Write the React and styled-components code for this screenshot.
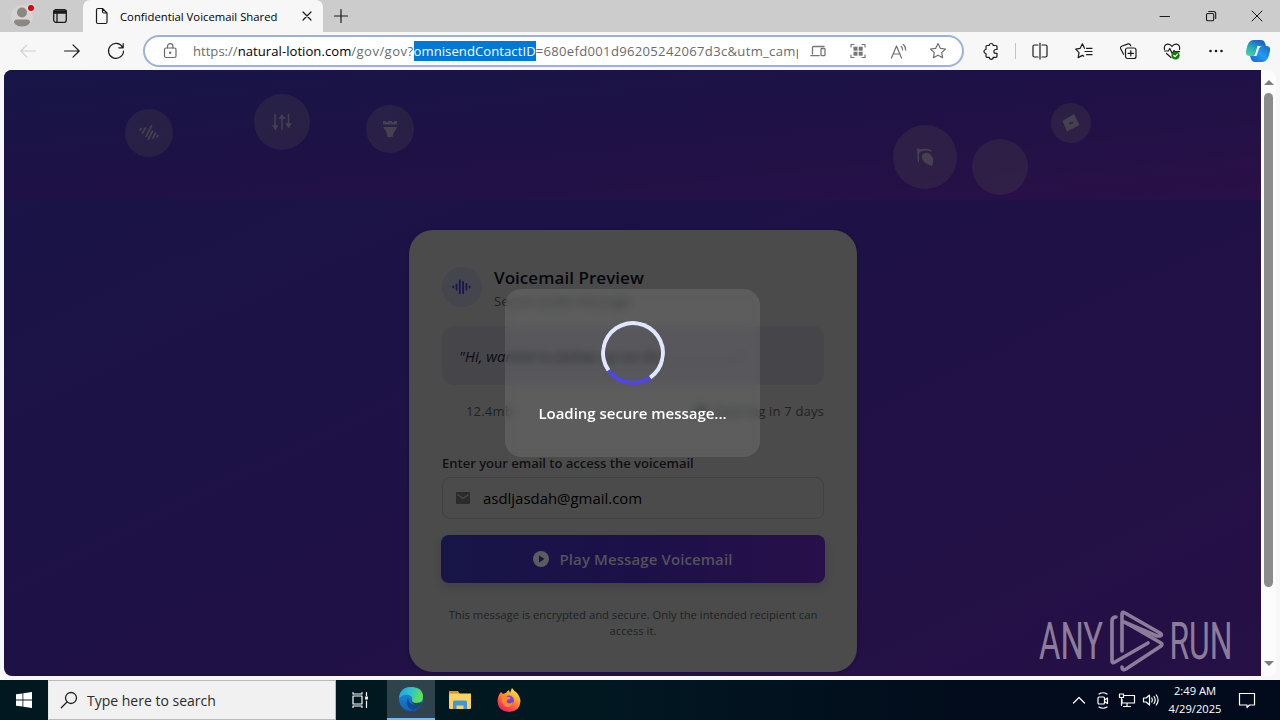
import styled, { createGlobalStyle, css } from "styled-components";

const GlobalStyle = createGlobalStyle`
  * {
    box-sizing: border-box;
  }
  body {
    margin: 0;
    overflow: hidden;
    font-family: "Open Sans", "Noto Sans", sans-serif;
    color: #000;
  }
  svg {
    display: block;
    flex: none;
    overflow: visible;
  }
`

const Screen = styled.div`
  width: 1280px;
  height: 720px;
  display: flex;
  flex-direction: column;
  background: #f7f7f7;
`

/* ---------- Browser ---------- */

const TabStrip = styled.div`
  height: 32px;
  display: flex;
  background: #ccc;
`

const Slot = styled.div`
  width: ${({ $w }) => $w}px;
  height: 100%;
  flex: none;
  display: flex;
  align-items: center;
  justify-content: center;
`

const StripStart = styled.div`
  width: 83px;
  display: flex;
  padding-left: 3px;
  border-bottom-right-radius: 4px;
`

const Tab = styled.div`
  width: 240px;
  display: flex;
  align-items: center;
  padding-left: 12px;
  background: #f7f7f7;
  border-radius: 7px 7px 0 0;
`

const TabTitle = styled.div`
  flex: 1;
  padding-left: 11px;
  font-size: 11.3px;
  white-space: nowrap;
`

const StripSpace = styled.div`
  flex: 1;
`

const Toolbar = styled.div`
  height: 38px;
  flex: none;
  display: flex;
  align-items: center;
  padding-left: 6px;
`

const AddressBar = styled.div`
  width: 821px;
  height: 32px;
  margin: 0 7px 0 5px;
  display: flex;
  align-items: center;
  border: 2px solid #9cb2d9;
  border-radius: 16px;
  background: #fff;
  padding-left: 5px;
`

const Url = styled.div`
  width: 605px;
  margin-left: 3px;
  overflow: hidden;
  white-space: nowrap;
  font-size: 13.1px;
  line-height: 20px;
  color: #6b6b6b;

  b {
    font-weight: 400;
    letter-spacing: 0.04px;
    color: #000;
  }
  mark {
    display: inline-block;
    height: 20px;
    letter-spacing: 0.06px;
    background: #0078d7;
    color: #fff;
  }
`

const Path = styled.span`
  letter-spacing: ${({ $spacing }) => $spacing}px;
`

const Divider = styled.div`
  width: 1px;
  height: 16px;
  margin: 0 2px 0 4px;
  background: #c4c4c4;
`

const Viewport = styled.div`
  height: 606px;
  margin: 0 4px;
  display: flex;
  border-radius: 8px;
  overflow: hidden;
`

const Scrollbar = styled.div`
  width: 15px;
  display: flex;
  flex-direction: column;
  align-items: center;
  padding: 10px 0 10px;
  background: #fcfcfc;
`

const Thumb = styled.div`
  width: 9px;
  height: 494px;
  margin: 8px 0 auto;
  border-radius: 5px;
  background: #8b8b8b;
`

/* ---------- Page ---------- */

const Page = styled.main`
  position: relative;
  width: 1257px;
  height: 606px;
  overflow: hidden;
  background: linear-gradient(to bottom right, #191447 0%, #1e1145 50%, #261046 100%);
`

const Hero = styled.div`
  height: 130px;
  background: linear-gradient(to bottom right, #171547 0%, #1e1145 48%, #2a1047 100%);
`

const Bubble = styled.div`
  position: absolute;
  left: ${({ $x }) => $x}px;
  top: ${({ $y }) => $y}px;
  width: ${({ $size }) => $size}px;
  height: ${({ $size }) => $size}px;
  display: flex;
  align-items: center;
  justify-content: center;
  border-radius: 50%;
  background: rgba(72, 66, 74, 0.3);
  color: #464150;
`

const Card = styled.section`
  width: 448px;
  height: 442px;
  margin: 30px 0 0 405px;
  padding: 37px 33px 0;
  border-radius: 24px;
  background: #4b4b4b;
  box-shadow: 0 0 3px rgba(20, 16, 60, 0.8);
`

const CardHead = styled.div`
  display: flex;
  gap: 12px;
  height: 40px;
`

const Badge = styled.div`
  width: 40px;
  height: 40px;
  display: flex;
  align-items: center;
  justify-content: center;
  border-radius: 50%;
  background: #45454e;
`

const Title = styled.h2`
  margin: -3px 0 0;
  font-size: 17px;
  font-weight: 600;
  letter-spacing: 0.05px;
  line-height: 28px;
  color: #06070c;
`

const Subtitle = styled.p`
  margin: 0;
  font-size: 13px;
  line-height: 19px;
  color: #202224;
`

const Quote = styled.div`
  height: 59px;
  margin-top: 19px;
  padding: 0 17px;
  border-radius: 12px;
  background: #46464a;
  font-size: 15px;
  font-style: italic;
  line-height: 60px;
  color: #0b0d12;
  white-space: nowrap;

  span {
    color: #26282e;
    letter-spacing: 1.6px;
  }
`

const Meta = styled.div`
  display: flex;
  align-items: center;
  justify-content: space-between;
  height: 20px;
  margin-top: 16px;
  padding-left: 24px;
  font-size: 13px;
  letter-spacing: 0.18px;
  color: #202224;

  div {
    display: flex;
    align-items: center;
    gap: 7px;
  }
`

const Label = styled.label`
  display: block;
  margin-top: 32px;
  font-size: 13px;
  font-weight: 600;
  line-height: 20px;
  color: #0f1113;
`

const Field = styled.div`
  height: 42px;
  margin-top: 4px;
  display: flex;
  align-items: center;
  gap: 13px;
  padding-left: 13px;
  border: 1px solid #404143;
  border-radius: 8px;
  font-size: 14.95px;
  color: #000;
`

const PlayButton = styled.button`
  width: 384px;
  height: 48px;
  margin: 16px 0 0 -1px;
  padding: 0;
  display: flex;
  align-items: center;
  justify-content: center;
  gap: 10px;
  border: 0;
  border-radius: 8px;
  background: linear-gradient(to right, #171547, #1c1049 50%, #28104a);
  box-shadow: 0 4px 10px rgba(0, 0, 0, 0.14);
  font-family: inherit;
  font-size: 15px;
  font-weight: 600;
  letter-spacing: 0.1px;
  color: #54525a;
`

const Footnote = styled.p`
  margin: 24px 0 0;
  text-align: center;
  font-size: 11.25px;
  line-height: 16px;
  color: #202224;
`

const Overlay = styled.div`
  position: absolute;
  inset: 0;
  display: flex;
  align-items: center;
  justify-content: center;
`

const LoaderBox = styled.div`
  width: 255px;
  height: 168px;
  display: flex;
  flex-direction: column;
  align-items: center;
  padding-top: 32px;
  border-radius: 16px;
  background: rgba(255, 255, 255, 0.1);
  backdrop-filter: blur(4px);
`

const Spinner = styled.div`
  width: 64px;
  height: 64px;
  border: 4px solid #e0e7ff;
  border-top-color: #4f46e5;
  border-radius: 50%;
  transform: rotate(190deg);
`

const LoaderText = styled.p`
  margin: 16px 0 0;
  font-size: 15px;
  font-weight: 600;
  line-height: 24px;
  letter-spacing: -0.02px;
  color: #fff;
  white-space: nowrap;
`

const Watermark = styled.div`
  position: absolute;
  left: 1034px;
  top: 539px;
`

/* ---------- Taskbar ---------- */

const Taskbar = styled.footer`
  height: 40px;
  margin-top: 4px;
  flex: none;
  display: flex;
  background: linear-gradient(to right, #011821 0%, #011821 45%, #020c1c 75%, #020b1c 100%);
`

const SearchBox = styled.div`
  width: 288px;
  display: flex;
  align-items: center;
  padding-left: 12px;
  gap: 10px;
  border: 1px solid #b9b9b9;
  border-left-color: #e5e5e5;
  background: #f1f1f1;
  font-size: 14px;
  color: #2b2b2b;
`

const AppSlot = styled(Slot)`
  ${({ $active }) => $active && css`
    background: #2e434b;
    border-bottom: 2px solid #76b9ed;
  `}
`

const TaskViewSlot = styled(Slot)`
  padding-right: 3px;
`

const Clock = styled.div`
  width: 64px;
  display: flex;
  flex-direction: column;
  justify-content: center;
  text-align: center;
  font-size: 11.2px;
  line-height: 18px;
  color: #fff;
`

/* ---------- Icons ---------- */

const Icon = ({ size = 18, color = "#1b1b1b", sw = 1.2, box = 18, children }) => (
  <svg width={size} height={size} viewBox={`0 0 ${box} ${box}`} fill="none" stroke={color} strokeWidth={sw} strokeLinecap="round" strokeLinejoin="round">
    {children}
  </svg>
)

const Avatar = () => (
  <svg width="26" height="26" viewBox="0 0 26 26">
    <circle cx="13" cy="13" r="11" fill="#d6d3d1" />
    <circle cx="13" cy="9.5" r="5" fill="#8b8784" />
    <path d="M5 19.5q0-3 3-3h10q3 0 3 3q-2 4-8 4t-8-4z" fill="#8b8784" />
    <circle cx="22" cy="5" r="4" fill="#ddd" />
    <circle cx="22" cy="5" r="3" fill="#d8000c" />
  </svg>
)

const Workspaces = () => (
  <Icon size={14} box={14} sw={1.3}>
    <rect x=".7" y=".7" width="12.6" height="12.6" rx="2.2" />
    <path d="M1 2h12v2H1z" fill="#1b1b1b" />
    <path d="M4 4v9" />
  </Icon>
)

const star = "M9 1.5l2.3 4.8 5.2.7-3.8 3.6.9 5.2L9 13.3l-4.6 2.5.9-5.2L1.5 7l5.2-.7z"

const Lock = () => (
  <Icon size={18} color="#6b6b6b">
    <rect x="3.5" y="6" width="11.5" height="9.5" rx="1.5" />
    <path d="M6.500 6V4.300a2.700 2.700 0 0 1 5.400 0V6" />
    <circle cx="9.200" cy="10.800" r=".6" fill="#6b6b6b" />
  </Icon>
)

const Devices = () => (
  <Icon size={16} box={16} color="#767676" sw={1.3}>
    <path d="M2.500 11V4.500q0-1 1-1H14M.8 12.700h8.400" />
    <rect x="11" y="5.500" width="4" height="7.200" rx=".8" />
  </Icon>
)

const QrApps = () => (
  <Icon size={16} box={16} color="#767676" sw={1.2}>
    <path d="M1 4V1.500h3M12 1.500h3V4M15 12v2.500h-3M4 14.500H1V12" />
    <g fill="#767676" stroke="none">
      <rect x="3.500" y="3.700" width="4" height="4" />
      <rect x="8.700" y="3.700" width="4" height="4" />
      <rect x="3.500" y="8.700" width="4" height="4" />
      <rect x="8.700" y="8.700" width="4" height="4" />
    </g>
  </Icon>
)

const ReadAloud = () => (
  <Icon size={17} box={17} color="#6f6f6f">
    <path d="M1.500 15L6.500 3l5 12M3.300 11h6.400M11 3.300q1.700 1.300 1.600 3.700M13.300 1.500q2.500 2 2.300 5.500" />
  </Icon>
)

const Copilot = () => (
  <svg width="26" height="26" viewBox="0 0 26 26">
    <defs>
      <linearGradient id="cpA" x1="0" y1="1" x2="0.6" y2="0">
        <stop offset="0" stopColor="#4fd7a2" />
        <stop offset=".45" stopColor="#2bb4b6" />
        <stop offset="1" stopColor="#1c62c9" />
      </linearGradient>
      <linearGradient id="cpB" x1="0" y1="1" x2="1" y2="0">
        <stop offset="0" stopColor="#1560d8" />
        <stop offset=".5" stopColor="#219bf0" />
        <stop offset="1" stopColor="#1769c9" />
      </linearGradient>
    </defs>
    <path d="M8 2h8q3 0 4 3l1 3h-3q-3 0-4 3l-2 5q-1 2-4 2H5q-5 0-4-5Q3 2 8 2z" fill="url(#cpA)" />
    <path d="M18 24h-8q-3 0-4-3l-1-3h3q3 0 4-3l2-5q1-2 4-2h3q5 0 4 5q-2 11-7 11z" fill="url(#cpB)" />
    <path d="M12.500 8H16q-1.500 1-2.300 3.500L12 16.500q-.5 1.500-1 1.500H9q1-1 1.500-3z" fill="#fff" />
  </svg>
)

const Waves = ({ color, size = 20 }) => (
  <svg width={size} height={size} viewBox="0 0 20 20" stroke={color} strokeWidth="1.800" strokeLinecap="round">
    <path d="M1.300 9.500v1M4.500 7.500v5M7.800 3.500v12.500M11.100 5v11M14.400 7v5.500M17.700 9.500v1" />
  </svg>
)

const AnyRunMark = () => (
  <svg width="200" height="66" viewBox="0 0 200 66" opacity=".58" fill="#d8cbd6">
    <text x="1" y="50" fontFamily="Roboto" fontSize="51" textLength="64" lengthAdjust="spacingAndGlyphs">ANY</text>
    <text x="131.500" y="50" fontFamily="Roboto" fontSize="51" textLength="63" lengthAdjust="spacingAndGlyphs">RUN</text>
    <g fill="none" stroke="#d8cbd6" strokeWidth="3.600" strokeLinejoin="round" strokeLinecap="round">
      <path d="M78 8q-4 0-4 4v40q0 3 3 1l33-19" />
      <path d="M84 42V5q0-3 3-1l35 20q3 2 0 3l-3 0L86 13" />
      <path d="M84 58q0 4 4 2l35-23q2-2 0-3l-33-19" />
    </g>
  </svg>
)

const Edge = () => (
  <svg width="26" height="26" viewBox="0 0 26 26">
    <defs>
      <linearGradient id="edA" x1="0" y1="0" x2="1" y2=".3">
        <stop offset="0" stopColor="#1b9de2" />
        <stop offset=".5" stopColor="#2cc3cd" />
        <stop offset="1" stopColor="#63de57" />
      </linearGradient>
      <linearGradient id="edB" x1="0" y1="0" x2="0" y2="1">
        <stop offset="0" stopColor="#1c8fe0" />
        <stop offset="1" stopColor="#1462bd" />
      </linearGradient>
    </defs>
    <circle cx="13" cy="13" r="12" fill="url(#edB)" />
    <path d="M1 12Q2 1 13 1q12 0 12 10 0 6-7 6-5 0-4-3 1-2-1-4-6-4-12 2z" fill="url(#edA)" />
    <path d="M10 12q-4 9 5 12 6-1 9-6-3 2-7 1-6-1-7-7z" fill="#104a91" />
    <path d="M14 13q-1 4 4 4l6-.500q1 1 0 2-4 2-8 0-4-3-2-5.500z" fill="#2e434b" />
  </svg>
)

const Explorer = () => (
  <svg width="22" height="20" viewBox="0 0 22 20">
    <path d="M0 1h9l2 3h-11z" fill="#e0931e" />
    <path d="M0 3.500h22V18q0 1-1 1H1q-1 0-1-1z" fill="#f9d262" />
    <path d="M4 19v-7q0-1.500 1.500-1.500h11Q18 10.500 18 12v7h-3.500v-3.500h-7V19z" fill="#3f97d4" />
  </svg>
)

const Firefox = () => (
  <svg width="24" height="24" viewBox="0 0 24 24">
    <defs>
      <linearGradient id="ffA" x1=".8" y1="0" x2=".2" y2="1">
        <stop offset="0" stopColor="#fff04a" />
        <stop offset=".4" stopColor="#ff9a2b" />
        <stop offset=".75" stopColor="#ff3f4d" />
        <stop offset="1" stopColor="#e1177b" />
      </linearGradient>
    </defs>
    <path d="M4 4l2 2q2-1 3-1 1-2 3-3l1 3q1-3 2-5 2 3 4 4 4 4 4.500 9Q23 23.500 12 24 1 23.500.5 13 1 7 4 4z" fill="url(#ffA)" />
    <circle cx="12" cy="12.500" r="5" fill="#7a43d8" />
    <path d="M5 9q3-2 6 0l3 .500q-1 2-3 2-2 1-1 3 3 2 6-.500-1 5-6 5-6-1-5-10z" fill="#ff8a2a" />
  </svg>
)

export default function App() {
  return (
    <Screen>
      <GlobalStyle />
      <TabStrip>
        <StripStart>
          <Slot $w={38}><Avatar /></Slot>
          <Slot $w={38}><Workspaces /></Slot>
        </StripStart>
        <Tab>
          <Icon size={14} box={14}>
            <path d="M1.500 1Q1.500 -.5 3 -.5h4.500l4.500 4.500v9q0 1.500-1.500 1.500H3q-1.500 0-1.500-1.500zM7.500 -.5v3q0 1.500 1.500 1.500h3" />
          </Icon>
          <TabTitle>Confidential Voicemail Shared</TabTitle>
          <Slot $w={32}>
            <Icon size={8} box={8}><path d="M0 0l8 8M8 0L0 8" /></Icon>
          </Slot>
        </Tab>
        <Slot $w={36}>
          <Icon size={14} box={14}><path d="M7 .5v13M.5 7h13" /></Icon>
        </Slot>
        <StripSpace />
        <Slot $w={46}><Icon size={10} box={10} sw={1}><path d="M0 5.500h9.500" /></Icon></Slot>
        <Slot $w={46}>
          <Icon size={10} box={10} sw={1.1}>
            <rect x=".5" y="2.500" width="7.200" height="7.200" rx="1.300" />
            <path d="M2.700.500h4.800q2.200 0 2.200 2.200V7.500" />
          </Icon>
        </Slot>
        <Slot $w={46}><Icon size={10} box={10} sw={1}><path d="M0 0l10 10M10 0L0 10" /></Icon></Slot>
      </TabStrip>

      <Toolbar>
        <Slot $w={44}><Icon color="#d0d0d0"><path d="M16.500 9H1.800M8 2.800L1.800 9 8 15.200" /></Icon></Slot>
        <Slot $w={44}><Icon><path d="M1.500 9h14.700M10 2.800L16.200 9 10 15.200" /></Icon></Slot>
        <Slot $w={44}><Icon><path d="M15.700 5.500A7.500 7.500 0 1 0 16.500 9M16.200 1.500v4.300h-4.400" /></Icon></Slot>
        <AddressBar>
          <Slot $w={40}><Lock /></Slot>
          <Url>
            https://<b>natural-lotion.com</b><Path $spacing={0.43}>/gov/gov?</Path><mark>omnisendContactID</mark><Path $spacing={0.3}>=680efd001d96205242067d3c&amp;utm_campaign</Path>
          </Url>
          <Slot $w={40}><Devices /></Slot>
          <Slot $w={40}><QrApps /></Slot>
          <Slot $w={40}><ReadAloud /></Slot>
          <Slot $w={40}><Icon color="#6f6f6f"><path d={star} /></Icon></Slot>
        </AddressBar>
        <Slot $w={40}>
          <Icon>
            <path d="M5 3.500h2.200a2 2 0 0 1 4 0H14q1 0 1 1v3h-1.200a1.900 1.900 0 0 0 0 3.800H15v3q0 1-1 1h-2.800a2 2 0 0 1-4 0H5q-1 0-1-1v-2.800a2 2 0 0 1 0-4V4.500q0-1 1-1z" />
          </Icon>
        </Slot>
        <Divider />
        <Slot $w={44}>
          <Icon><path d="M7 3H3.500Q2 3 2 4.500v9Q2 15 3.500 15H7M11 3h3.500Q16 3 16 4.500v9q0 1.500-1.500 1.500H11M9 1v16" /></Icon>
        </Slot>
        <Slot $w={44}>
          <Icon><path d="M9.500 6.300L7.400 1.800 5.200 6.300l-4.500.9 3.300 3.400-.8 5 4.200-2.200 1.300.7M11.500 6.300h5.500M10 9.500h7M11.500 12.700h5.500" /></Icon>
        </Slot>
        <Slot $w={44}>
          <Icon>
            <rect x="6.500" y="6" width="10.500" height="10.500" rx="2" />
            <path d="M11.800 8.500v5.500M9 11.300h5.500M4.500 12.300L1.600 6.500q-.6-1.500 1-2.200l6.500-2.400q1.500-.4 2.200 1l.4 1" />
          </Icon>
        </Slot>
        <Slot $w={44}>
          <Icon>
            <path d="M1.500 7.500Q.5 3 4.500 2.200 7.500 2 9 4.500q1.500-2.500 4.500-2.300 4 .8 3 5.300M1.500 9h3.800l1.500-2.500 2.400 5L11 8.500l.8 1.200h4.700M3.500 11.500L8 15.500" />
            <circle cx="12.500" cy="13.500" r="3.800" fill="#107c10" stroke="#107c10" strokeWidth=".5" />
            <path d="M10.800 13.500l1.300 1.200 2.200-2.400" stroke="#fff" />
          </Icon>
        </Slot>
        <Slot $w={44}>
          <Icon><g fill="#1b1b1b" stroke="none"><circle cx="3.500" cy="9" r="1.300" /><circle cx="9" cy="9" r="1.300" /><circle cx="14.500" cy="9" r="1.300" /></g></Icon>
        </Slot>
        <Slot $w={40}><Copilot /></Slot>
      </Toolbar>

      <Viewport>
        <Page>
          <Hero />
          <Bubble $x={120.5} $y={38.5} $size={48}>
            <svg width="20" height="18" viewBox="0 0 20 18" stroke="currentColor" strokeWidth="1.700" strokeLinecap="round">
              <path d="M1 6l1-1.500M3.500 9l3-5M7 12.500L12.500 2M9.500 15l4-8M14 14l2.500-5M18 13l.8-1.500" />
            </svg>
          </Bubble>
          <Bubble $x={250} $y={24} $size={56}>
            <svg width="20" height="18" viewBox="0 0 20 18" stroke="currentColor" strokeWidth="1.500" fill="currentColor">
              <path d="M3 1v14M1.500 13h3.500l-1.500 3zM10 5v12M8 5h4L10 2.500zM16.500 1v10M14.500 11h4L16.500 14z" />
            </svg>
          </Bubble>
          <Bubble $x={361.5} $y={34.5} $size={48}>
            <svg width="16" height="16" viewBox="0 0 16 16" fill="currentColor">
              <path d="M1 0h3v1h2V0h4v1h2V0h3v3.500H1zM1 6h14l-2.500 5H12l-1.500 5h-5L4.500 11z" />
            </svg>
          </Bubble>
          <Bubble $x={888.5} $y={55} $size={64}>
            <svg width="18" height="18" viewBox="0 0 18 18" fill="currentColor">
              <path d="M1 0l3 1.500Q12-.5 16 2.500L15 3.500Q11 1.500 5 3.300L3 5v9H1.800z" />
              <path d="M6 7q4-4 8-1l3 4v5l-1 3-5-2q-6-3-5-9z" />
            </svg>
          </Bubble>
          <Bubble $x={967.5} $y={69} $size={56} />
          <Bubble $x={1047} $y={33} $size={40}>
            <svg width="18" height="18" viewBox="0 0 18 18" fill="currentColor">
              <path d="M12 0l5.500 11L5 17.500 .5 7z" />
              <path d="M7 9.500l4-1" stroke="#2b2147" strokeWidth="1.800" />
            </svg>
          </Bubble>

          <Card>
            <CardHead>
              <Badge><Waves color="#171450" /></Badge>
              <div>
                <Title>Voicemail Preview</Title>
                <Subtitle>Secure audio message</Subtitle>
              </div>
            </CardHead>
            <Quote>"Hi, wanted to follow up on the <span>............."</span></Quote>
            <Meta>
              <div>12.4mb</div>
              <div>
                <Icon size={14} box={14} color="#303234"><circle cx="7" cy="7" r="5.500" fill="#303234" /></Icon>
                Expiring in 7 days
              </div>
            </Meta>
            <Label>Enter your email to access the voicemail</Label>
            <Field>
              <svg width="14" height="12" viewBox="0 0 14 12">
                <rect width="14" height="12" rx="1" fill="#292b2d" />
                <path d="M1.500 2.500L7 6.500l5.500-4" fill="none" stroke="#4b4b4b" strokeWidth="1.300" />
              </svg>
              asdljasdah@gmail.com
            </Field>
            <PlayButton>
              <svg width="16" height="16" viewBox="0 0 16 16">
                <circle cx="8" cy="8" r="8" fill="#5c5b60" />
                <path d="M6 4.500l5.500 3.500L6 11.500z" fill="#1a1048" />
              </svg>
              Play Message Voicemail
            </PlayButton>
            <Footnote>This message is encrypted and secure. Only the intended recipient can access it.</Footnote>
          </Card>

          <Overlay>
            <LoaderBox>
              <Spinner />
              <LoaderText>Loading secure message...</LoaderText>
            </LoaderBox>
          </Overlay>
          <Watermark><AnyRunMark /></Watermark>
        </Page>
        <Scrollbar>
          <svg width="10" height="5" viewBox="0 0 10 5"><path d="M0 5l5-5 5 5z" fill="#7d7d7d" /></svg>
          <Thumb />
          <svg width="10" height="5" viewBox="0 0 10 5"><path d="M0 0l5 5 5-5z" fill="#7d7d7d" /></svg>
        </Scrollbar>
      </Viewport>

      <Taskbar>
        <Slot $w={48}>
          <svg width="16" height="16" viewBox="0 0 16 16" fill="#fff">
            <path d="M0 2.300l6.500-.9v6.200H0zM7.300 1.300L16 0v7.600H7.300zM0 8.400h6.500v6.200L0 13.700zM7.300 8.400H16V16l-8.700-1.300z" />
          </svg>
        </Slot>
        <SearchBox>
          <Icon size={16} box={16} color="#222" sw={1.3}><circle cx="10" cy="6" r="5.500" /><path d="M6 10L.3 15.700" /></Icon>
          Type here to search
        </SearchBox>
        <TaskViewSlot $w={51}>
          <Icon size={16} box={16} color="#fff" sw={1.2}>
            <rect x="1" y="4" width="9" height="8" />
            <path d="M1 .5V2h9V.5M1 15.500V14h9v1.500M14.500.5v3M14.500 9v6.500" />
            <path d="M14.500 4.500v3" strokeWidth="2.800" strokeLinecap="butt" />
          </Icon>
        </TaskViewSlot>
        <AppSlot $w={48} $active><Edge /></AppSlot>
        <AppSlot $w={49}><Explorer /></AppSlot>
        <AppSlot $w={49}><Firefox /></AppSlot>
        <StripSpace />
        <Slot $w={24}><Icon size={12} box={12} color="#fff"><path d="M.5 9L6 3.500 11.500 9" /></Icon></Slot>
        <Slot $w={24}>
          <Icon size={14} box={14} color="#fff">
            <rect x="2" y="4" width="6.500" height="7" rx="1" />
            <path d="M8.500 7l3-2v5.500l-3-2M3 1Q7-1.500 11 1M3 14q4 2.500 8 0" />
          </Icon>
        </Slot>
        <Slot $w={24}>
          <Icon size={16} box={16} color="#fff">
            <path d="M5.500 3.500h10v7.500H3V7.500M8 11v3.500M4.500 14.500h7" />
            <path d="M.5 2h4v3.500h-4zM2.500 5.500v8" />
          </Icon>
        </Slot>
        <Slot $w={24}>
          <Icon size={16} box={16} color="#fff">
            <path d="M.5 6v4h2.700l3.300 3V3L3.200 6zM8.800 6q1.200 2 0 4M11 4.500q2.400 3.500 0 7M13.300 3q3.600 5 0 10" />
          </Icon>
        </Slot>
        <Clock>
          <span>2:49 AM</span>
          <span>4/29/2025</span>
        </Clock>
        <Slot $w={40}>
          <Icon size={16} box={16} color="#fff"><path d="M.5 1.500h15v11.500h-5L8 15.500V13H.5z" /></Icon>
        </Slot>
        <Slot $w={13} />
      </Taskbar>
    </Screen>
  )
}
